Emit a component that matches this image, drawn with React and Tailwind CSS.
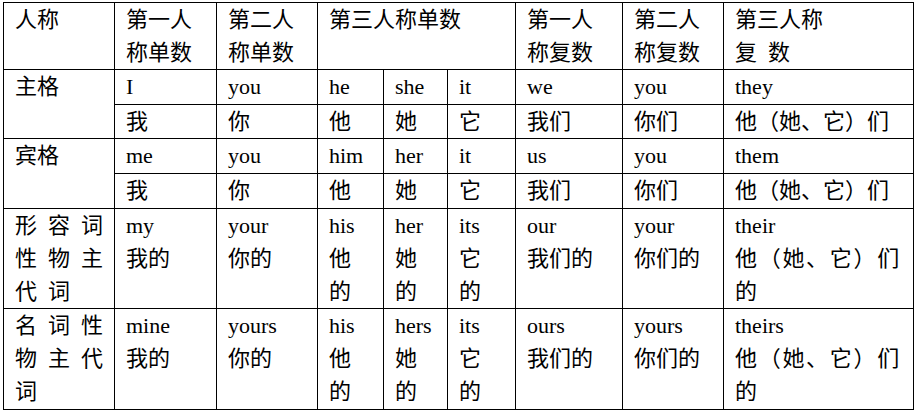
import React from 'react';

// Each cell is a list of lines; a string means a single line
const BODY_ROWS = [
  {
    label: ['主格'],
    span: 2,
    cells: ['I', 'you', 'he', 'she', 'it', 'we', 'you', 'they'],
    height: 'h-[35px]',
  },
  {
    cells: ['我', '你', '他', '她', '它', '我们', '你们', '他（她、它）们'],
    height: 'h-[34px]',
  },
  {
    label: ['宾格'],
    span: 2,
    cells: ['me', 'you', 'him', 'her', 'it', 'us', 'you', 'them'],
    height: 'h-[35px]',
  },
  {
    cells: ['我', '你', '他', '她', '它', '我们', '你们', '他（她、它）们'],
    height: 'h-[35px]',
  },
  {
    label: ['形容词', '性物主', '代词'],
    spaced: true,
    cells: [
      ['my', '我的'],
      ['your', '你的'],
      ['his', '他', '的'],
      ['her', '她', '的'],
      ['its', '它', '的'],
      ['our', '我们的'],
      ['your', '你们的'],
      ['their', 'WIDE', '的'],
    ],
    height: 'h-[100px]',
  },
  {
    label: ['名词性', '物主代', '词'],
    spaced: true,
    cells: [
      ['mine', '我的'],
      ['yours', '你的'],
      ['his', '他', '的'],
      ['hers', '她', '的'],
      ['its', '它', '的'],
      ['ours', '我们的'],
      ['yours', '你们的'],
      ['theirs', 'WIDE', '的'],
    ],
    height: 'h-[101px]',
  },
];

const cellClass = 'border border-black px-[11px] py-0 align-top text-left font-normal';

const Lines = ({ value }) => {
  const lines = Array.isArray(value) ? value : [value];
  return lines.map((line, i) =>
    line === 'WIDE' ? (
      <div key={i} className="tracking-[1.7px] whitespace-nowrap">他（她、它）们</div>
    ) : (
      <div key={i} className="whitespace-nowrap">{line}</div>
    )
  );
};

const App = () => {
  return (
    <div
      className="w-[916px] h-[414px] bg-white pl-[3px] pt-[2px] text-black text-[22px] leading-[33px]"
      style={{ fontFamily: '"Liberation Serif", "Noto Sans CJK SC", serif' }}
    >
      <table className="table-fixed border-collapse w-[910px]">
        <colgroup>
          <col className="w-[111px]" />
          <col className="w-[102px]" />
          <col className="w-[101px]" />
          <col className="w-[66px]" />
          <col className="w-[64px]" />
          <col className="w-[68px]" />
          <col className="w-[107px]" />
          <col className="w-[101px]" />
          <col className="w-[190px]" />
        </colgroup>
        <thead>
          <tr className="h-[67px] font-bold">
            <th className={`${cellClass} font-bold`}>人称</th>
            <th className={`${cellClass} font-bold`}>
              <Lines value={['第一人', '称单数']} />
            </th>
            <th className={`${cellClass} font-bold`}>
              <Lines value={['第二人', '称单数']} />
            </th>
            <th colSpan={3} className={`${cellClass} font-bold`}>第三人称单数</th>
            <th className={`${cellClass} font-bold`}>
              <Lines value={['第一人', '称复数']} />
            </th>
            <th className={`${cellClass} font-bold`}>
              <Lines value={['第二人', '称复数']} />
            </th>
            <th className={`${cellClass} font-bold`}>
              <div>第三人称</div>
              <div>
                <span className="mr-[11px]">复</span>数
              </div>
            </th>
          </tr>
        </thead>
        <tbody>
          {BODY_ROWS.map((row, r) => (
            <tr key={r} className={row.height}>
              {row.label && (
                <td rowSpan={row.span || 1} className={`${cellClass} font-bold`}>
                  {row.label.map((line, i) => (
                    <div key={i} className={row.spaced ? 'tracking-[11px] whitespace-nowrap' : ''}>
                      {line}
                    </div>
                  ))}
                </td>
              )}
              {row.cells.map((cell, c) => (
                <td key={c} className={cellClass}>
                  <Lines value={cell} />
                </td>
              ))}
            </tr>
          ))}
        </tbody>
      </table>
    </div>
  );
};

export default App;
